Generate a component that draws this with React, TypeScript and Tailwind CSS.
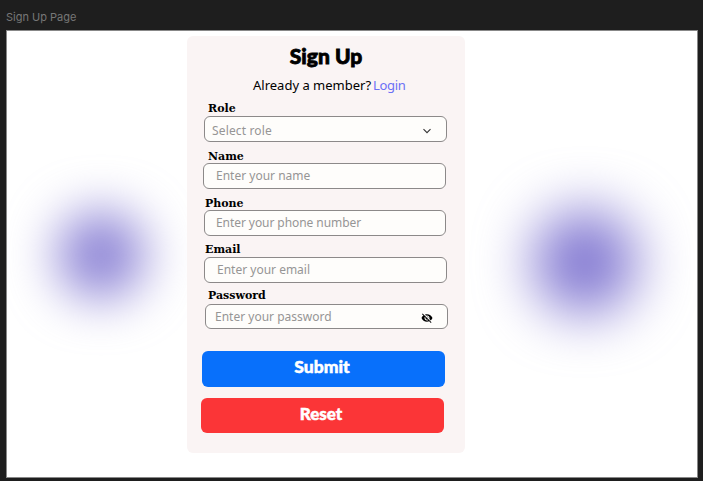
import type { ReactNode } from 'react';

const display = "font-['Lato','Open_Sans',sans-serif] font-black";
const body = "font-['Noto_Sans',sans-serif] font-normal";

type FieldProps = {
  label: string;
  placeholder: string;
  className: string;
  labelClass: string;
  boxClass: string;
  textClass: string;
  children?: ReactNode;
};

function Field({ label, placeholder, className, labelClass, boxClass, textClass, children }: FieldProps) {
  return (
    <div className={`flex flex-col justify-between ${className}`}>
      <span className={`h-[14px] whitespace-nowrap pt-[2px] font-['DejaVu_Serif',serif] text-[11px] font-bold leading-[14px] text-black ${labelClass}`}>
        {label}
      </span>
      <div className={`flex items-center justify-between rounded-[6px] border border-[#8c8989] bg-[#fefdfb] ${boxClass}`}>
        <span className={`whitespace-nowrap text-[12px] leading-4 text-[#969595] ${body} ${textClass}`}>{placeholder}</span>
        {children}
      </div>
    </div>
  );
}

function Chevron() {
  return (
    <svg className="mr-[14px] mt-[3px] h-[10px] w-[10px]" viewBox="0 0 10 10" fill="none" stroke="#333" strokeWidth="1.1">
      <path d="M1.5 3.2 5 6.7l3.5-3.5" />
    </svg>
  );
}

function EyeOff() {
  return (
    <svg className="mr-[14px] mt-[3px] h-3 w-3" viewBox="0 0 24 24" fill="#000">
      <path d="M12 7c2.76 0 5 2.24 5 5 0 .65-.13 1.26-.36 1.83l2.92 2.92c1.51-1.26 2.7-2.89 3.43-4.75-1.73-4.39-6-7.5-11-7.5-1.4 0-2.74.25-3.98.7l2.16 2.16C10.74 7.13 11.35 7 12 7zM2 4.27l2.28 2.28.46.46C3.08 8.3 1.78 10.02 1 12c1.73 4.39 6 7.5 11 7.5 1.55 0 3.03-.3 4.38-.84l.42.42L19.73 22 21 20.73 3.27 3 2 4.27zM7.53 9.8l1.55 1.55c-.05.21-.08.43-.08.65 0 1.66 1.34 3 3 3 .22 0 .44-.03.65-.08l1.55 1.55c-.67.33-1.41.53-2.2.53-2.76 0-5-2.24-5-5 0-.79.2-1.53.53-2.2zm4.31-.78 3.15 3.15.02-.16c0-1.66-1.34-3-3-3l-.17.01z" />
    </svg>
  );
}

export default function App() {
  return (
    <div className="h-[481px] w-[703px] overflow-hidden bg-[#1e1e1e]">
      <div className="h-[30px] pl-[6px] pt-[9px] font-['Inter',sans-serif] text-[11px] leading-4 text-[#777]">
        Sign Up Page
      </div>
      <main className="relative ml-[6px] flex h-[448px] w-[692px] overflow-hidden border border-[#888] bg-white">
        <div className="absolute left-[50px] top-[180px] h-[88px] w-[88px] rounded-full bg-[#8c83d5] blur-[25px]" />
        <div className="absolute left-[526px] top-[179px] h-[104px] w-[104px] rounded-full bg-[#8177d1] blur-[28px]" />
        <section className="relative ml-[180px] mt-[5px] flex h-[417px] w-[278px] flex-col rounded-[6px] bg-[#faf4f4]">
          <h1 className={`mt-[7px] h-[26px] w-full whitespace-nowrap text-center text-[21px] leading-[26px] text-black [-webkit-text-stroke:0.8px_#000] ${display}`}>
            Sign Up
          </h1>
          <p className={`ml-[66px] mt-[7px] flex h-[18px] gap-[2px] whitespace-nowrap text-[13px] leading-[18px] text-black ${body}`}>
            <span className="w-[118px]">Already a member?</span>
            <a className="tracking-[-0.3px] text-[#6b70f6]">Login</a>
          </p>
          <Field label="Role" placeholder="Select role" className="mt-[6px] h-[42px]" labelClass="ml-[21px]" boxClass="ml-[17px] h-[26px] w-[243px]" textClass="ml-[7px] mt-[3px] tracking-[0.15px]">
            <Chevron />
          </Field>
          <Field label="Name" placeholder="Enter your name" className="mt-[6px] h-[41px]" labelClass="ml-[21px]" boxClass="ml-[16px] h-[26px] w-[243px]" textClass="ml-3" />
          <Field label="Phone" placeholder="Enter your phone number" className="mt-[6px] h-[41px]" labelClass="ml-[18px]" boxClass="ml-[17px] h-[26px] w-[242px]" textClass="ml-[11px] tracking-[-0.07px]" />
          <Field label="Email" placeholder="Enter your email" className="mt-[5px] h-[42px]" labelClass="ml-[18px]" boxClass="ml-[17px] h-[26px] w-[243px]" textClass="ml-3" />
          <Field label="Password" placeholder="Enter your password" className="mt-[4px] h-[42px]" labelClass="ml-[21px]" boxClass="ml-[18px] h-[25px] w-[243px]" textClass="ml-[9px]">
            <EyeOff />
          </Field>
          <button className={`ml-[15px] mt-[22px] flex h-[36px] w-[243px] shrink-0 justify-center rounded-[6px] bg-[#0870fb] pr-[3px] text-[17.5px] leading-[32px] text-white [-webkit-text-stroke:0.5px_#fff] ${display}`}>
            Submit
          </button>
          <button className={`ml-[14px] mt-[11px] flex h-[35px] w-[243px] shrink-0 justify-center rounded-[6px] bg-[#fb3537] pr-[3px] text-[17px] leading-[31px] text-white [-webkit-text-stroke:0.5px_#fff] ${display}`}>
            Reset
          </button>
        </section>
      </main>
    </div>
  );
}
